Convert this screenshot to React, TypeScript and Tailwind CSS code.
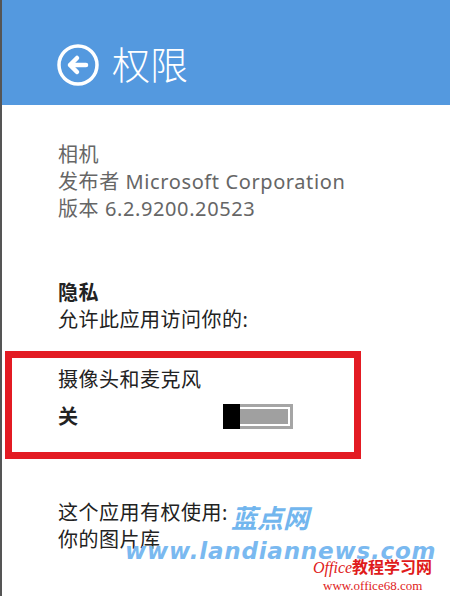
const BackIcon = () => (
  <svg width="42" height="42" viewBox="0 0 42 42" fill="none">
    <circle cx="21" cy="21" r="19" stroke="white" strokeWidth="3.5" />
    <path d="M29 21H13.5" stroke="white" strokeWidth="4.5" strokeLinecap="round" />
    <path d="M20 14L13 21L20 28" stroke="white" strokeWidth="4.5" strokeLinecap="round" strokeLinejoin="round" />
  </svg>
);

const Toggle = () => (
  <div className="flex h-[25px] w-[70px]">
    <div className="h-full w-[17px] bg-black" />
    <div className="flex flex-1 border-[3px] border-l-0 border-[#a5a5a5] bg-white p-[2px] pl-0">
      <div className="flex-1 bg-[#a0a0a0]" />
    </div>
  </div>
);

const App = () => {
  return (
    <div
      className="relative h-[596px] w-[450px] overflow-hidden border-l-2 border-[#555] bg-white"
      style={{ fontFamily: '"Noto Sans", "Noto Sans CJK SC", sans-serif' }}
    >
      {/* Header */}
      <header className="flex h-[105px] items-start gap-[13px] bg-[#5499df] pl-[55px] pt-[44px] text-white">
        <BackIcon />
        <h1 className="-mt-[4px] text-[38px] font-light leading-[48px]">权限</h1>
      </header>

      {/* App info */}
      <div className="pl-[56px] pt-[36px] text-[20px] leading-[27px] tracking-[0.6px] text-[#666]">
        <p>相机</p>
        <p>发布者 Microsoft Corporation</p>
        <p>版本 6.2.9200.20523</p>
      </div>

      {/* Privacy */}
      <div className="pl-[56px] pt-[57px] text-[20px] leading-[27px] tracking-[0.5px] text-[#222]">
        <p className="font-bold">隐私</p>
        <p>允许此应用访问你的:</p>
      </div>

      <div className="ml-[3px] mt-[18px] h-[108px] w-[356px] border-[7px] border-[#e31b23] pl-[46px] pt-[8px] text-[20px] leading-[27px] tracking-[0.5px] text-[#222]">
        <p>摄像头和麦克风</p>
        <div className="mt-[10px] flex items-center">
          <span className="w-[165px] font-bold">关</span>
          <Toggle />
        </div>
      </div>

      <div className="pl-[56px] pt-[40px] text-[20px] leading-[27px] tracking-[0.5px] text-[#222]">
        <p>这个应用有权使用:</p>
        <p>你的图片库</p>
      </div>

      {/* Watermarks */}
      <div className="pointer-events-none absolute left-[229px] top-[499px] text-[26px] font-bold italic text-[#72b6ee]">
        蓝点网
      </div>
      <div
        className="pointer-events-none absolute left-[123px] top-[534px] text-[23px] font-bold italic tracking-[0.8px] text-[#7ab9f0]"
        style={{ fontFamily: '"DejaVu Sans", sans-serif' }}
      >
        www.landiannews.com
      </div>
      <div
        className="pointer-events-none absolute left-[311px] top-[556px] text-[16px] text-[#e01b1b]"
        style={{ fontFamily: '"Liberation Serif", "Noto Sans CJK SC", serif' }}
      >
        <span className="italic">Office</span>
        <span className="font-bold">教程学习网</span>
      </div>
      <div
        className="pointer-events-none absolute left-[321px] top-[576px] text-[13px] text-[#e01b1b]"
        style={{ fontFamily: '"Liberation Serif", serif' }}
      >
        www.office68.com
      </div>
    </div>
  );
};

export default App;
